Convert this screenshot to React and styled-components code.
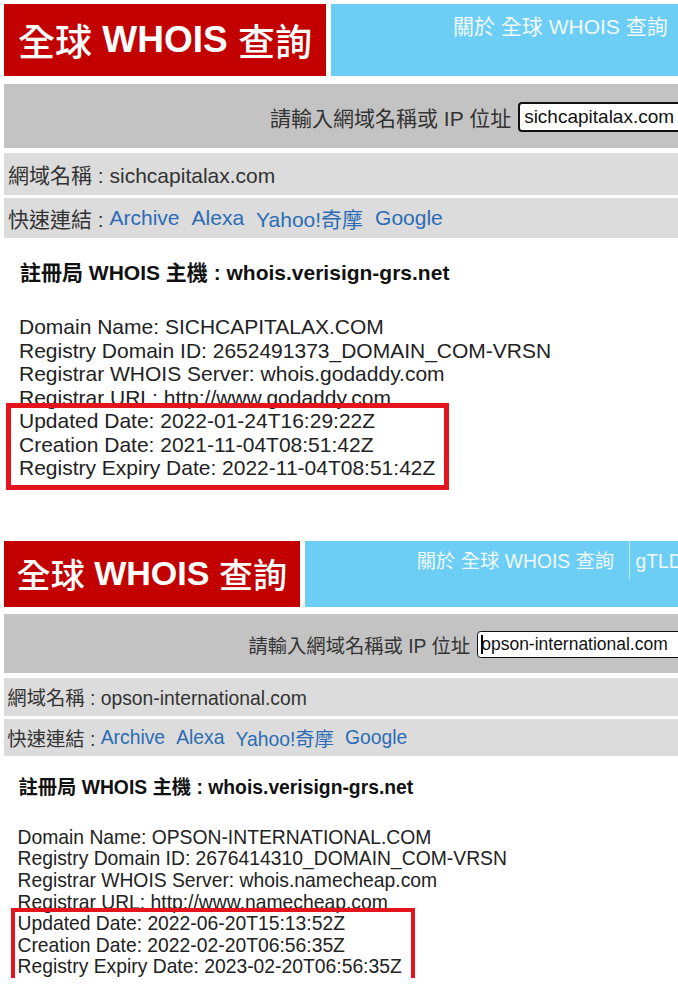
import React from 'react';
import styled, { createGlobalStyle } from 'styled-components';

const GlobalStyle = createGlobalStyle`
  html, body {
    margin: 0;
    padding: 0;
    background: #fff;
    overflow: hidden;
  }
  body {
    font-family: "Liberation Sans", "Noto Sans CJK TC", sans-serif;
  }
`;

const Page = styled.div`
  width: 678px;
  height: 985px;
  overflow: hidden;
`;

const Shot = styled.section`
  zoom: ${p => p.$scale};
  width: ${p => Math.ceil(678 / p.$scale)}px;
  height: ${p => (p.$height ? `${p.$height}px` : 'auto')};
  box-sizing: border-box;
  padding: 4px 0 0 4px;
  overflow: hidden;
`;

const Header = styled.header`
  display: flex;
  gap: 5px;
  height: 72px;
`;

const Brand = styled.div`
  flex: 0 0 322px;
  display: flex;
  align-items: center;
  justify-content: center;
  background: #c20000;
  color: #fff;
  font-size: 37px;
  font-weight: bold;
  white-space: pre;
`;

const Han = styled.span`
  font-weight: 500;
`;

const Nav = styled.nav`
  flex: 1;
  min-width: 0;
  display: flex;
  align-items: flex-start;
  padding-left: 116px;
  background: #6ccdf5;
  overflow: hidden;
`;

const NavItem = styled.a`
  flex: none;
  padding: 11px 16px 7px 6px;
  font-size: 21px;
  line-height: 24px;
  color: #f2fafe;
  border-right: 1px solid rgba(255, 255, 255, 0.6);
  white-space: nowrap;
`;

const SearchBar = styled.form`
  display: flex;
  align-items: center;
  gap: 7px;
  height: 64px;
  margin-top: 8px;
  padding-left: 266px;
  background: #c3c3c3;
`;

const SearchLabel = styled.label`
  flex: none;
  padding-top: 2px;
  font-size: 21px;
  color: #333;
  white-space: nowrap;
`;

const FieldWrap = styled.div`
  position: relative;
  flex: none;
  padding-top: 2px;
`;

const Field = styled.input`
  display: block;
  width: 260px;
  height: 30px;
  box-sizing: border-box;
  padding: 0 4px;
  border: 2px solid #111;
  border-radius: 4px;
  background: #fff;
  font: 19px "Liberation Sans", sans-serif;
  color: #111;
  outline: none;
`;

const Caret = styled.span`
  position: absolute;
  left: 5px;
  top: 7px;
  width: 2px;
  height: 20px;
  background: #000;
`;

const InfoRow = styled.div`
  display: flex;
  align-items: center;
  height: ${p => p.$h}px;
  margin-top: ${p => p.$gap}px;
  padding-left: 4px;
  background: #dcdcdc;
  font-size: 21px;
  color: #333;
  white-space: pre;
`;

const QuickLink = styled.a`
  color: #2c6cb4;
  text-decoration: none;
  & + & {
    margin-left: 12px;
  }
`;

const ServerTitle = styled.h2`
  margin: 23px 0 0;
  padding-left: 16px;
  font-size: 21px;
  line-height: 24px;
  font-weight: bold;
  color: #111;
`;

const Record = styled.div`
  position: relative;
  margin-top: 30px;
  padding-left: 15px;
  font-size: 21px;
  line-height: 23.5px;
  color: #222;
  white-space: nowrap;
`;

const Highlight = styled.div`
  position: absolute;
  top: 88px;
  left: ${p => p.$left}px;
  width: ${p => p.$width}px;
  height: 87px;
  box-sizing: border-box;
  border: 5px solid #e3141c;
`;

const lookups = [
  {
    domain: 'sichcapitalax.com',
    scale: 1,
    height: 537,
    box: { left: 2, width: 443 },
    lines: [
      'Domain Name: SICHCAPITALAX.COM',
      'Registry Domain ID: 2652491373_DOMAIN_COM-VRSN',
      'Registrar WHOIS Server: whois.godaddy.com',
      'Registrar URL: http://www.godaddy.com',
      'Updated Date: 2022-01-24T16:29:22Z',
      'Creation Date: 2021-11-04T08:51:42Z',
      'Registry Expiry Date: 2022-11-04T08:51:42Z',
    ],
  },
  {
    domain: 'opson-international.com',
    scale: 0.92,
    caret: true,
    box: { left: 8, width: 439 },
    lines: [
      'Domain Name: OPSON-INTERNATIONAL.COM',
      'Registry Domain ID: 2676414310_DOMAIN_COM-VRSN',
      'Registrar WHOIS Server: whois.namecheap.com',
      'Registrar URL: http://www.namecheap.com',
      'Updated Date: 2022-06-20T15:13:52Z',
      'Creation Date: 2022-02-20T06:56:35Z',
      'Registry Expiry Date: 2023-02-20T06:56:35Z',
    ],
  },
];

const WhoisShot = ({ domain, scale, height, caret, box, lines }) => (
  <Shot $scale={scale} $height={height}>
    <Header>
      <Brand>
        <Han>全球</Han> WHOIS <Han>查詢</Han>
      </Brand>
      <Nav>
        <NavItem>關於 全球 WHOIS 查詢</NavItem>
        <NavItem>gTLD 列表</NavItem>
      </Nav>
    </Header>
    <SearchBar onSubmit={e => e.preventDefault()}>
      <SearchLabel>請輸入網域名稱或 IP 位址</SearchLabel>
      <FieldWrap>
        <Field value={domain} readOnly />
        {caret && <Caret />}
      </FieldWrap>
    </SearchBar>
    <InfoRow $h={42} $gap={5}>網域名稱 : {domain}</InfoRow>
    <InfoRow $h={40} $gap={3}>
      {'快速連結 : '}
      <QuickLink>Archive</QuickLink>
      <QuickLink>Alexa</QuickLink>
      <QuickLink>Yahoo!奇摩</QuickLink>
      <QuickLink>Google</QuickLink>
    </InfoRow>
    <ServerTitle>註冊局 WHOIS 主機 : whois.verisign-grs.net</ServerTitle>
    <Record>
      {lines.map(line => (
        <div key={line}>{line}</div>
      ))}
      <Highlight $left={box.left} $width={box.width} />
    </Record>
  </Shot>
);

const App = () => (
  <Page>
    <GlobalStyle />
    {lookups.map(l => (
      <WhoisShot key={l.domain} {...l} />
    ))}
  </Page>
);

export default App;
